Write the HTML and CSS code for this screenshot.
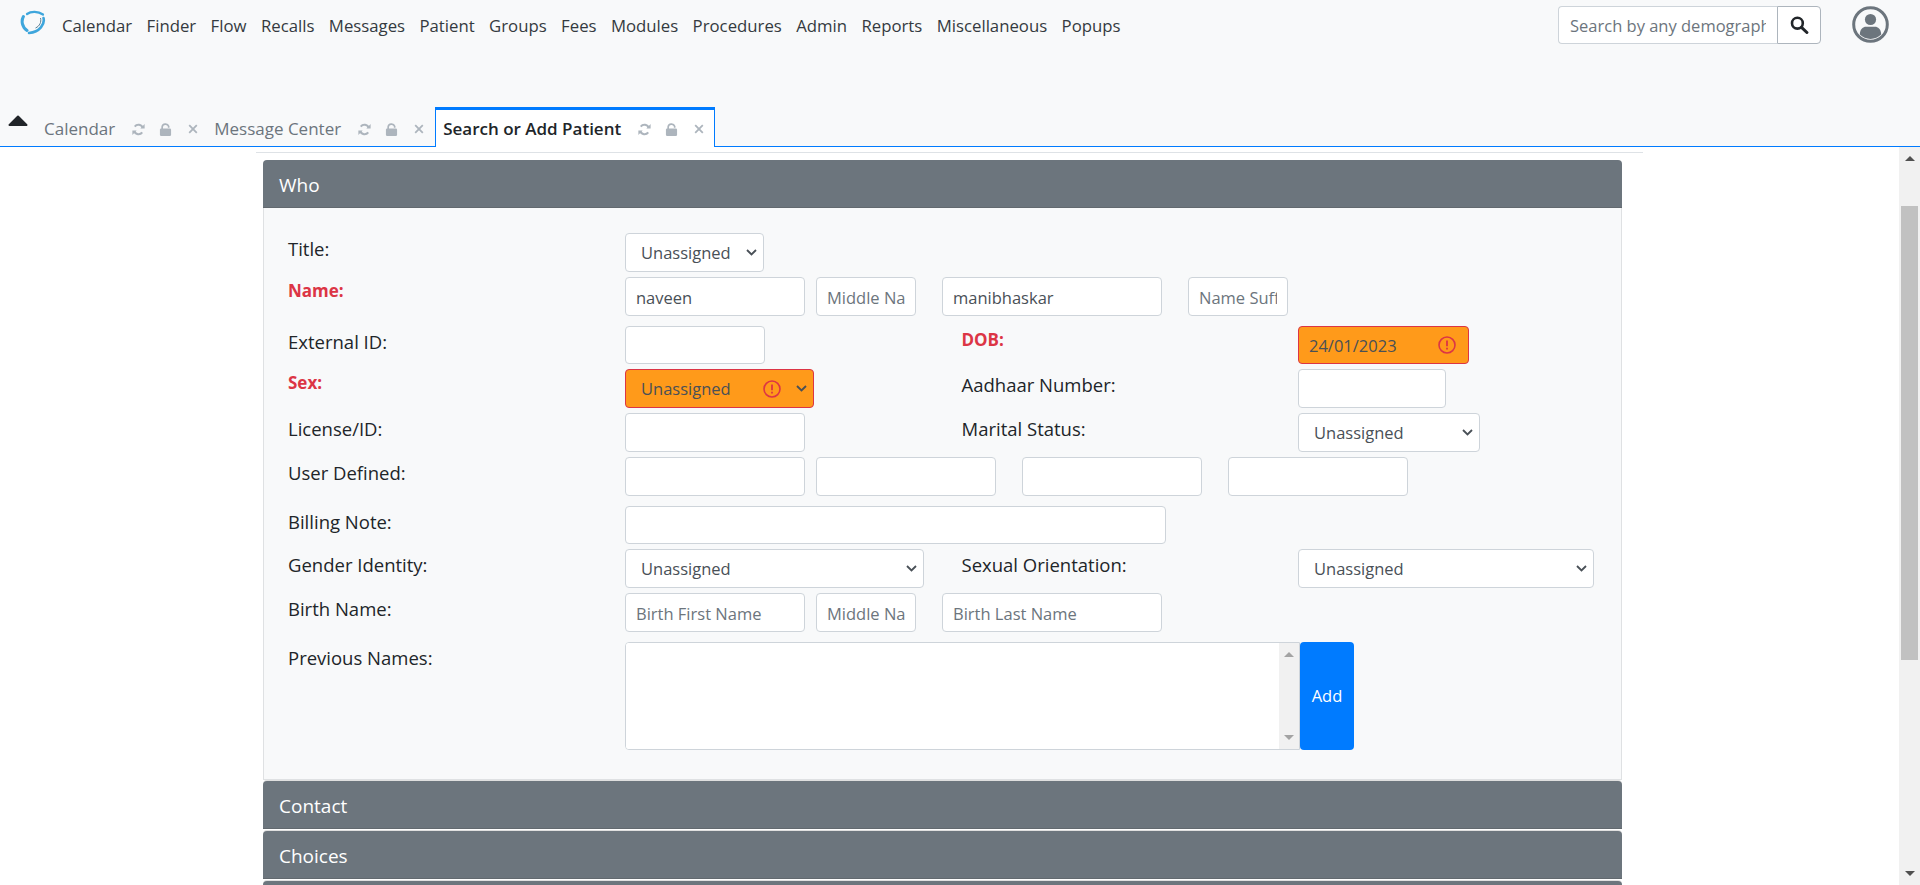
FILE: index.html
```html
<!DOCTYPE html>
<html lang="en">
<head>
    <meta charset="UTF-8">
    <meta name="viewport" content="width=device-width, initial-scale=1.0">
    <title>Search or Add Patient</title>
    <link rel="stylesheet" href="styles.css">
</head>
<body>

    <svg class="defs" width="0" height="0">
        <symbol id="i-sync" viewBox="0 0 14 14">
            <path d="M11.6 5.2A4.9 4.9 0 0 0 3 4" fill="none" stroke="currentColor" stroke-width="2.2"/>
            <path d="M9 5.8h4.6V1.2z" fill="currentColor"/>
            <path d="M2.4 8.8A4.9 4.9 0 0 0 11 10" fill="none" stroke="currentColor" stroke-width="2.2"/>
            <path d="M5 8.2H.4v4.6z" fill="currentColor"/>
        </symbol>
        <symbol id="i-lock" viewBox="0 0 14 14">
            <path d="M3.4 6.5V4.2a3.6 3.4 0 0 1 7 -.6V5" fill="none" stroke="currentColor" stroke-width="1.8"/>
            <rect x="1" y="6" width="12" height="8" rx="1.4" fill="currentColor"/>
        </symbol>
        <symbol id="i-close" viewBox="0 0 10 10">
            <path d="M1.2 1.2l7.6 7.6M8.8 1.2L1.2 8.8" fill="none" stroke="currentColor" stroke-width="1.8"/>
        </symbol>
    </svg>

    <header class="top">
        <nav class="menu">
            <svg class="logo" width="26" height="26" viewBox="0 0 26 26">
                <path d="M3.4 7.5C1 12 2 18 7 21.5" fill="none" stroke="#3ea6dc" stroke-width="3" stroke-linecap="round"/>
                <path d="M7 5C11 2 18 2 23 5.5" fill="none" stroke="#3ea6dc" stroke-width="2.2" stroke-linecap="round"/>
                <path d="M23.5 9C25 15 20 23 9 24" fill="none" stroke="#3ea6dc" stroke-width="2.6" stroke-linecap="round"/>
                <path d="M20.5 9c1 4-.6 8-5 10" fill="none" stroke="#5d7f92" stroke-width="1"/>
            </svg>
            <a class="menu-link">Calendar</a>
            <a class="menu-link">Finder</a>
            <a class="menu-link">Flow</a>
            <a class="menu-link">Recalls</a>
            <a class="menu-link">Messages</a>
            <a class="menu-link">Patient</a>
            <a class="menu-link">Groups</a>
            <a class="menu-link">Fees</a>
            <a class="menu-link">Modules</a>
            <a class="menu-link">Procedures</a>
            <a class="menu-link">Admin</a>
            <a class="menu-link">Reports</a>
            <a class="menu-link">Miscellaneous</a>
            <a class="menu-link">Popups</a>

            <form class="search">
                <input class="search-input" type="text" placeholder="Search by any demographics">
                <button class="search-btn" type="button" aria-label="Search">
                    <svg width="19" height="18" viewBox="0 0 19 18">
                        <circle cx="7.4" cy="7.2" r="5.4" fill="none" stroke="#212529" stroke-width="2.6"/>
                        <path d="M11.5 11.3l5.4 5.2" stroke="#212529" stroke-width="3" stroke-linecap="round"/>
                    </svg>
                </button>
            </form>

            <svg class="avatar" width="37" height="37" viewBox="0 0 37 37">
                <circle cx="18.5" cy="18.5" r="16.8" fill="none" stroke="#6c757d" stroke-width="3"/>
                <circle cx="18.5" cy="13.5" r="5.6" fill="#6c757d"/>
                <path d="M7.8 28.5c.2-6 3.6-7.8 6-7.8h9.4c2.4 0 5.8 1.8 6 7.8-2.8 2.8-6.6 4.4-10.7 4.4s-7.9-1.6-10.7-4.4z" fill="#6c757d"/>
            </svg>
        </nav>

        <div class="tabs">
            <svg class="collapse" width="20" height="12" viewBox="0 0 20 12">
                <path d="M10 1.5L18.5 10H1.5z" fill="#212529" stroke="#212529" stroke-width="2" stroke-linejoin="round"/>
            </svg>
            <div class="tab">
                <span class="tab-name">Calendar</span>
                <svg class="tab-sync"><use href="#i-sync"/></svg>
                <svg class="tab-lock"><use href="#i-lock"/></svg>
                <svg class="tab-close"><use href="#i-close"/></svg>
            </div>
            <div class="tab">
                <span class="tab-name">Message Center</span>
                <svg class="tab-sync"><use href="#i-sync"/></svg>
                <svg class="tab-lock"><use href="#i-lock"/></svg>
                <svg class="tab-close"><use href="#i-close"/></svg>
            </div>
            <div class="tab active">
                <span class="tab-name">Search or Add Patient</span>
                <svg class="tab-sync"><use href="#i-sync"/></svg>
                <svg class="tab-lock"><use href="#i-lock"/></svg>
                <svg class="tab-close"><use href="#i-close"/></svg>
            </div>
        </div>
    </header>

    <div class="pane">
        <main class="content">
            <div class="page">
                <div class="section-head">Who</div>
                <section class="section-body">

                    <div class="row">
                        <label class="lbl">Title:</label>
                        <div class="cell"><select class="ctl sel w-title"><option>Unassigned</option></select></div>
                    </div>

                    <div class="row row-tall">
                        <label class="lbl req">Name:</label>
                        <div class="cell wide">
                            <input class="ctl w-first" type="text" value="naveen">
                            <input class="ctl w-mid" type="text" placeholder="Middle Name">
                            <input class="ctl w-last gap-lg" type="text" value="manibhaskar">
                            <input class="ctl w-mid gap-lg" type="text" placeholder="Name Suffix">
                        </div>
                    </div>

                    <div class="row row-short">
                        <label class="lbl">External ID:</label>
                        <div class="cell"><input class="ctl w-ext" type="text"></div>
                        <label class="lbl req">DOB:</label>
                        <div class="cell"><input class="ctl w-dob invalid" type="text" value="24/01/2023"></div>
                    </div>

                    <div class="row">
                        <label class="lbl req">Sex:</label>
                        <div class="cell"><select class="ctl sel w-sex invalid-sel"><option>Unassigned</option></select></div>
                        <label class="lbl">Aadhaar Number:</label>
                        <div class="cell"><input class="ctl w-aadhaar" type="text"></div>
                    </div>

                    <div class="row">
                        <label class="lbl">License/ID:</label>
                        <div class="cell"><input class="ctl w-first" type="text"></div>
                        <label class="lbl">Marital Status:</label>
                        <div class="cell"><select class="ctl sel w-marital"><option>Unassigned</option></select></div>
                    </div>

                    <div class="row row-tall">
                        <label class="lbl">User Defined:</label>
                        <div class="cell wide">
                            <input class="ctl w-first" type="text">
                            <input class="ctl w-first" type="text">
                            <input class="ctl w-first gap-lg" type="text">
                            <input class="ctl w-first gap-lg" type="text">
                        </div>
                    </div>

                    <div class="row row-short">
                        <label class="lbl">Billing Note:</label>
                        <div class="cell wide"><input class="ctl w-billing" type="text"></div>
                    </div>

                    <div class="row">
                        <label class="lbl">Gender Identity:</label>
                        <div class="cell"><select class="ctl sel w-gender"><option>Unassigned</option></select></div>
                        <label class="lbl">Sexual Orientation:</label>
                        <div class="cell"><select class="ctl sel w-orient"><option>Unassigned</option></select></div>
                    </div>

                    <div class="row row-tall">
                        <label class="lbl">Birth Name:</label>
                        <div class="cell wide">
                            <input class="ctl w-first" type="text" placeholder="Birth First Name">
                            <input class="ctl w-mid" type="text" placeholder="Middle Name">
                            <input class="ctl w-last gap-lg" type="text" placeholder="Birth Last Name">
                        </div>
                    </div>

                    <div class="row row-prev">
                        <label class="lbl">Previous Names:</label>
                        <div class="cell wide">
                            <div class="names-box">
                                <textarea class="names"></textarea>
                                <div class="names-bar">
                                    <span class="arrow-up"></span>
                                    <span class="arrow-down"></span>
                                </div>
                            </div>
                            <button class="add-btn" type="button">Add</button>
                        </div>
                    </div>

                </section>
                <div class="section-head closed">Contact</div>
                <div class="section-head closed">Choices</div>
                <div class="section-head closed"></div>
            </div>
        </main>

        <div class="scrollbar">
            <span class="arrow-up"></span>
            <div class="thumb"></div>
            <span class="arrow-down"></span>
        </div>
    </div>

</body>
</html>
```

FILE: styles.css
```css
* {
    box-sizing: border-box;
}
body {
    margin: 0;
    height: 100vh;
    overflow: hidden;
    display: flex;
    flex-direction: column;
    background: #fff;
    color: #212529;
    font-family: "Open Sans", Arial, sans-serif;
    font-size: 16.5px;
    line-height: 24px;
}
.defs {
    position: absolute;
}

/* top bar */
.top {
    height: 147px;
    flex: none;
    display: flex;
    flex-direction: column;
    justify-content: space-between;
    background: #f8f9fa;
    border-bottom: 1px solid #007bff;
}
.menu {
    display: flex;
    align-items: flex-start;
    padding: 6px 31px 0 20px;
}
.logo {
    margin: 3px 16px 0 0;
    flex: none;
}
.menu-link {
    margin: 8px 14.4px 0 0;
    color: #343a40;
    font-size: 16.75px;
    white-space: nowrap;
}
.search {
    display: flex;
    margin-left: auto;
}
.search-input {
    width: 219px;
    height: 38px;
    padding: 0 11px;
    border: 1px solid #ced4da;
    border-right: 0;
    border-radius: 4px 0 0 4px;
    background: #fff;
    font: inherit;
}
.search-input::placeholder {
    color: #6c757d;
}
.search-btn {
    width: 44px;
    height: 38px;
    padding: 0;
    display: flex;
    align-items: center;
    justify-content: center;
    background: #fff;
    border: 1px solid #adb5bd;
    border-radius: 0 4px 4px 0;
}
.avatar {
    margin-left: 31px;
}

.tabs {
    display: flex;
    align-items: flex-end;
    height: 40px;
    margin-bottom: -1px;
    padding-left: 8px;
}
.collapse {
    margin: 0 7px 20px 0;
    flex: none;
}
.tab {
    height: 40px;
    display: flex;
    align-items: center;
    padding: 1px 6px 0 8px;
    color: #6c757d;
    font-size: 17px;
    border: 1px solid transparent;
    border-width: 3px 1px 0;
    white-space: nowrap;
}
.tab + .tab {
    padding-right: 10px;
}
.tab.active {
    padding: 1px 10px 0 7px;
    color: #212529;
    background: #fff;
    font-weight: 600;
    border-color: #007bff;
}
.tab-sync,
.tab-lock,
.tab-close {
    color: #adb5bd;
    flex: none;
}
.tab-sync {
    width: 13px;
    height: 13px;
    margin-left: 17px;
}
.tab-lock {
    width: 13px;
    height: 13px;
    margin-left: 14px;
}
.tab-close {
    width: 10px;
    height: 10px;
    margin-left: 16px;
}

/* main pane */
.pane {
    flex: 1;
    min-height: 0;
    display: flex;
}
.content {
    flex: 1;
    overflow: hidden;
    padding: 5px 0 0 256px;
}
.page {
    width: 1387px;
    padding: 7px 21px 0 7px;
    border-top: 1px solid #dee2e6;
}
.section-head {
    height: 48px;
    padding: 2px 16px 0;
    display: flex;
    align-items: center;
    background: #6c757d;
    color: #fff;
    font-size: 19px;
    border-radius: 4px 4px 0 0;
    border-bottom: 1px solid #62696f;
}
.section-head.closed {
    margin-top: 2px;
    box-shadow: 0 -1px 0 #dfdfdf;
}
.section-body {
    height: 572px;
    padding: 25px 0 0 24px;
    background: #f8f9fa;
    border: 1px solid #dfe1e3;
    border-top: 0;
}
.section-body + .section-head {
    margin-top: 1px;
}

/* form rows */
.row {
    display: grid;
    grid-template-columns: 337px 336.5px 336.5px auto;
    height: 44px;
}
.row-tall {
    height: 49px;
}
.row-short {
    height: 43px;
}
.row-prev {
    height: 108px;
}
.lbl {
    padding-top: 4px;
    font-size: 18.5px;
}
.lbl.req {
    padding-top: 3px;
    color: #dc3545;
    font-size: 17px;
    font-weight: 700;
    line-height: 21px;
}
.cell {
    display: flex;
    align-items: flex-start;
}
.cell.wide {
    grid-column: 2 / 5;
    gap: 11px;
}
.ctl {
    height: 39px;
    padding: 1px 10px 0;
    border: 1px solid #ced4da;
    border-radius: 4px;
    background-color: #fff;
    color: #495057;
    font: inherit;
}
.ctl::placeholder {
    color: #6c757d;
}
.row-short .ctl {
    height: 38px;
}
.sel {
    appearance: none;
    padding: 1px 32px 0 15px;
    background-image: url("data:image/svg+xml,%3Csvg xmlns='http://www.w3.org/2000/svg' width='11' height='7'%3E%3Cpath d='M1 1l4.5 4.5L10 1' fill='none' stroke='%23495057' stroke-width='1.8'/%3E%3C/svg%3E");
    background-repeat: no-repeat;
    background-position: right 6px center;
}
.invalid,
.invalid-sel {
    background-color: #ff9a1a;
    border-color: #dc3545;
    color: #495057;
}
.invalid {
    background-image: url("data:image/svg+xml,%3Csvg xmlns='http://www.w3.org/2000/svg' width='18' height='18'%3E%3Ccircle cx='9' cy='9' r='8' fill='none' stroke='%23dc3545' stroke-width='1.6'/%3E%3Cpath d='M9 4.6v5.6M9 11.8v1.7' stroke='%23dc3545' stroke-width='1.8'/%3E%3C/svg%3E");
    background-repeat: no-repeat;
    background-position: right 12px center;
}
.invalid-sel {
    background-image: url("data:image/svg+xml,%3Csvg xmlns='http://www.w3.org/2000/svg' width='11' height='7'%3E%3Cpath d='M1 1l4.5 4.5L10 1' fill='none' stroke='%23495057' stroke-width='1.8'/%3E%3C/svg%3E"), url("data:image/svg+xml,%3Csvg xmlns='http://www.w3.org/2000/svg' width='18' height='18'%3E%3Ccircle cx='9' cy='9' r='8' fill='none' stroke='%23dc3545' stroke-width='1.6'/%3E%3Cpath d='M9 4.6v5.6M9 11.8v1.7' stroke='%23dc3545' stroke-width='1.8'/%3E%3C/svg%3E");
    background-repeat: no-repeat;
    background-position: right 6px center, right 32px center;
}
.w-title { width: 139px; }
.w-first { width: 180px; }
.w-mid { width: 100px; }
.w-last { width: 220px; }
.w-ext { width: 140px; }
.w-dob { width: 171px; }
.w-sex { width: 189px; }
.w-aadhaar { width: 148px; }
.w-marital { width: 182px; }
.w-billing { width: 541px; }
.w-gender { width: 299px; }
.w-orient { width: 296px; }
.gap-lg { margin-left: 15px; }

.names-box {
    display: flex;
    width: 675px;
    height: 108px;
    border: 1px solid #ced4da;
    border-radius: 4px 0 0 4px;
    background: #fff;
    overflow: hidden;
}
.names {
    flex: 1;
    border: 0;
    resize: none;
    outline: none;
}
.names-bar {
    width: 20px;
    display: flex;
    flex-direction: column;
    justify-content: space-between;
    align-items: center;
    padding: 9px 0;
    background: #f1f1f1;
    color: #a3a3a3;
}
.add-btn {
    width: 54px;
    height: 108px;
    margin-left: -11px;
    padding: 0;
    border: 0;
    border-radius: 4px;
    background: #007bff;
    color: #fff;
    font: inherit;
}

/* fake scrollbars */
.arrow-up,
.arrow-down {
    display: block;
    width: 0;
    height: 0;
    border-left: 5px solid transparent;
    border-right: 5px solid transparent;
}
.arrow-up {
    border-bottom: 5px solid currentColor;
}
.arrow-down {
    border-top: 5px solid currentColor;
}
.scrollbar {
    position: relative;
    width: 21px;
    flex: none;
    display: flex;
    flex-direction: column;
    align-items: center;
    justify-content: space-between;
    padding: 9px 0;
    background: #f1f1f1;
    color: #505050;
}
.thumb {
    position: absolute;
    top: 59px;
    left: 2px;
    width: 17px;
    height: 454px;
    background: #c1c1c1;
}
```
